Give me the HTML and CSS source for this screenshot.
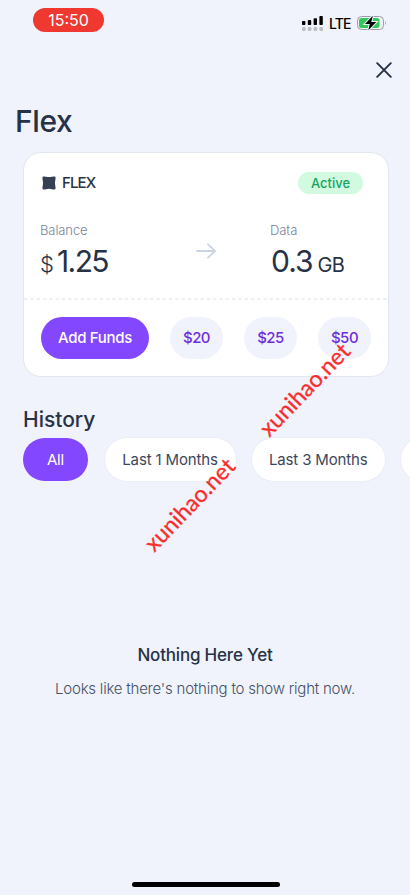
FILE: index.html
```html
<!DOCTYPE html>
<html lang="en">
<head>
<meta charset="utf-8">
<meta name="viewport" content="width=device-width, initial-scale=1">
<title>Flex</title>
<link rel="stylesheet" href="styles.css">
</head>
<body>
<div class="screen">
  <header class="status">
    <span class="clock">15:50</span>
    <div class="indicators">
      <svg class="signal" width="21" height="16" viewBox="0 0 21 16">
        <g fill="#000"><rect x="0" y="5" width="3.4" height="4" rx=".8"/><rect x="5.800" y="4" width="3.400" height="5" rx=".8"/><rect x="11.600" y="2.200" width="3.400" height="6.800" rx=".8"/><rect x="17.400" y="0" width="3.400" height="9" rx=".8"/></g>
        <g fill="#bcbec4"><rect x="0" y="11" width="3.600" height="4" rx="1.200"/><rect x="5.800" y="11" width="3.600" height="4" rx="1.200"/><rect x="11.600" y="11" width="3.600" height="4" rx="1.200"/><rect x="17.400" y="11" width="3.600" height="4" rx="1.200"/></g>
      </svg>
      <span class="lte">LTE</span>
      <svg class="battery" width="30" height="16" viewBox="0 0 30 16">
        <rect x=".5" y="1.500" width="26" height="13" rx="4" fill="none" stroke="#9a9da3"/>
        <rect x="2" y="3" width="20.500" height="10" rx="2.500" fill="#34c759"/>
        <path d="M28 5.800q1.600 2.200 0 4.400z" fill="#8e9197"/>
        <path d="M15.800.8 8 9h4.800l-1.500 6.200L19.300 7h-5z" fill="#000" stroke="#f0f3fb" stroke-width="2" paint-order="stroke"/>
      </svg>
    </div>
  </header>
  <div class="close-row">
    <svg width="16" height="16" viewBox="0 0 16 16"><path d="M1.200 1.200 14.800 14.800M14.800 1.200 1.200 14.800" stroke="#263044" stroke-width="1.900" stroke-linecap="round"/></svg>
  </div>
  <h1>Flex</h1>

  <section class="card">
    <div class="card-head">
      <svg width="14" height="14" viewBox="0 0 14 14"><path d="M1.300.5Q3 .3 4 .8q3 .5 6 0 1-.5 2.700-.3 1 .1.800 1.300Q13.700 3 13.300 4q-.7 3 0 6 .4 1 .2 2.500-.1 1-1.300 1Q11 13.600 10 13.200q-3-.7-6 0-1 .4-2.500.3-1-.1-1-1.300Q.3 11 .7 10q.7-3 0-6Q.3 3 .5 1.500.6.600 1.300.5z" fill="#353f55"/></svg>
      <span class="plan">FLEX</span>
      <span class="badge">Active</span>
    </div>
    <div class="amounts">
      <div class="amount">
        <div class="label">Balance</div>
        <div class="value"><span class="currency">$</span><span class="number">1.25</span></div>
      </div>
      <svg class="arrow" width="20" height="16" viewBox="0 0 20 16"><path d="M1 8h18M12 1.300 19 8l-7 6.700" fill="none" stroke="#cbd5e1" stroke-width="1.800" stroke-linecap="round" stroke-linejoin="round"/></svg>
      <div class="amount data">
        <div class="label">Data</div>
        <div class="value"><span class="number gigs">0.3</span><span class="unit">GB</span></div>
      </div>
    </div>
    <svg class="divider" width="364" height="2" viewBox="0 0 364 2"><path d="M0 1h364" stroke="#e7ebf3" stroke-width="1.500" stroke-dasharray="3.500 2.800"/></svg>
    <div class="actions">
      <span class="add">Add Funds</span>
      <span class="quick">$20</span>
      <span class="quick">$25</span>
      <span class="quick">$50</span>
    </div>
  </section>

  <h2>History</h2>
  <nav class="filters">
    <span class="chip selected">All</span>
    <span class="chip one">Last 1 Months</span>
    <span class="chip three">Last 3 Months</span>
    <span class="chip more"></span>
  </nav>

  <div class="empty">
    <h3>Nothing Here Yet</h3>
    <p>Looks like there's nothing to show right now.</p>
  </div>
  <div class="home"></div>

  <span class="mark mark-a">xunihao.net</span>
  <span class="mark mark-b">xunihao.net</span>
</div>
</body>
</html>
```
FILE: styles.css
```css
* { box-sizing: border-box; }
body { margin: 0; font-family: Inter, "Liberation Sans", sans-serif; color: #273247; background: #f0f3fb; }
svg { display: block; flex: none; }
h1, h2, h3, p { margin: 0; white-space: nowrap; }
.screen { position: relative; width: 410px; height: 895px; overflow: hidden; background: #f0f3fb; display: flex; flex-direction: column; }

.status { height: 48px; display: flex; justify-content: space-between; align-items: flex-start; padding: 8px 23px 0 33px; }
.clock { width: 71px; height: 24px; border-radius: 12px; background: #ee3830; color: #fff; font-size: 16px; line-height: 24px; font-weight: 400; text-align: center; }
.indicators { display: flex; margin-top: 8px; }
.signal { margin-right: 6px; }
.lte { width: 28px; font-size: 14px; line-height: 16px; font-weight: 500; color: #000; letter-spacing: -.9px; }
.battery { margin-top: -1px; }

.close-row { height: 55px; display: flex; justify-content: flex-end; padding: 14px 18px 0 0; }
h1 { padding-left: 15px; height: 49px; font-size: 30px; line-height: 36px; font-weight: 500; letter-spacing: -.4px; }

.card { width: 366px; height: 225px; margin-left: 23px; background: #fff; border: 1px solid #e1e6ef; border-radius: 18px; }
.card-head { display: flex; align-items: center; height: 22px; margin: 19px 25px 0 18px; }
.plan { margin: -1px 0 0 6px; font-size: 15px; font-weight: 500; letter-spacing: -.9px; }
.badge { margin-left: auto; width: 65px; height: 22px; border-radius: 11px; background: #d1fae0; color: #18a363; font-size: 13px; line-height: 22px; font-weight: 500; text-align: center; }
.amounts { height: 104px; display: flex; padding: 27px 0 0 16px; }
.amount { width: 156px; }
.label { height: 18px; font-size: 13px; line-height: 18px; color: #79839a; font-weight: 300; letter-spacing: -.1px; }
.value { display: flex; align-items: baseline; height: 40px; line-height: 40px; margin-top: 2px; }
.currency { width: 17px; font-size: 22px; font-weight: 300; }
.number { font-size: 30px; font-weight: 400; letter-spacing: -1.6px; }
.gigs { margin-left: 1px; letter-spacing: -1px; }
.arrow { margin: 22px 54px 0 0; }
.data { width: 110px; }
.unit { margin-left: 5px; font-size: 20px; letter-spacing: -.8px; }
.actions { display: flex; padding: 17px 0 0 17px; }
.add, .quick { height: 42px; border-radius: 21px; line-height: 42px; text-align: center; font-weight: 500; }
.add { width: 108px; font-size: 15px; letter-spacing: -.3px; color: #fff; background: #8347ff; }
.quick { width: 53px; font-size: 15px; letter-spacing: -.5px; color: #702edb; background: #f0f3fb; margin-left: 21px; }

h2 { margin: 29px 0 0 23px; height: 32px; font-size: 21px; line-height: 28px; font-weight: 500; letter-spacing: 0; }
.filters { display: flex; padding-left: 23px; gap: 16px; }
.chip { flex: none; height: 43px; line-height: 44px; border-radius: 22px; background: #fff; box-shadow: 0 0 0 .6px #e6eaf2; text-align: center; font-size: 15px; color: #3c475b; white-space: nowrap; letter-spacing: -.15px; }
.selected { width: 65px; color: #fff; background: #8347ff; box-shadow: none; }
.one { width: 131px; margin-left: .5px; }
.three { width: 132.5px; margin-left: .5px; }
.more { width: 120px; margin-left: .5px; }

.empty { margin-top: 160px; text-align: center; }
h3 { font-size: 17px; line-height: 28px; font-weight: 500; letter-spacing: -.2px; }
.empty p { margin-top: 9px; font-size: 15px; line-height: 22px; font-weight: 300; color: #445067; letter-spacing: -.22px; }
.home { margin: auto auto 8px 132px; width: 148px; height: 5px; border-radius: 3px; background: #000; }

.mark { position: absolute; width: 130px; height: 30px; line-height: 30px; text-align: center; font-family: Lato, sans-serif; font-size: 23px; color: #fb2c2c; -webkit-text-stroke: .3px #fb2c2c; transform: rotate(-46deg); white-space: nowrap; }
.mark-a { left: 239px; top: 374px; }
.mark-b { left: 124px; top: 489px; }
```
